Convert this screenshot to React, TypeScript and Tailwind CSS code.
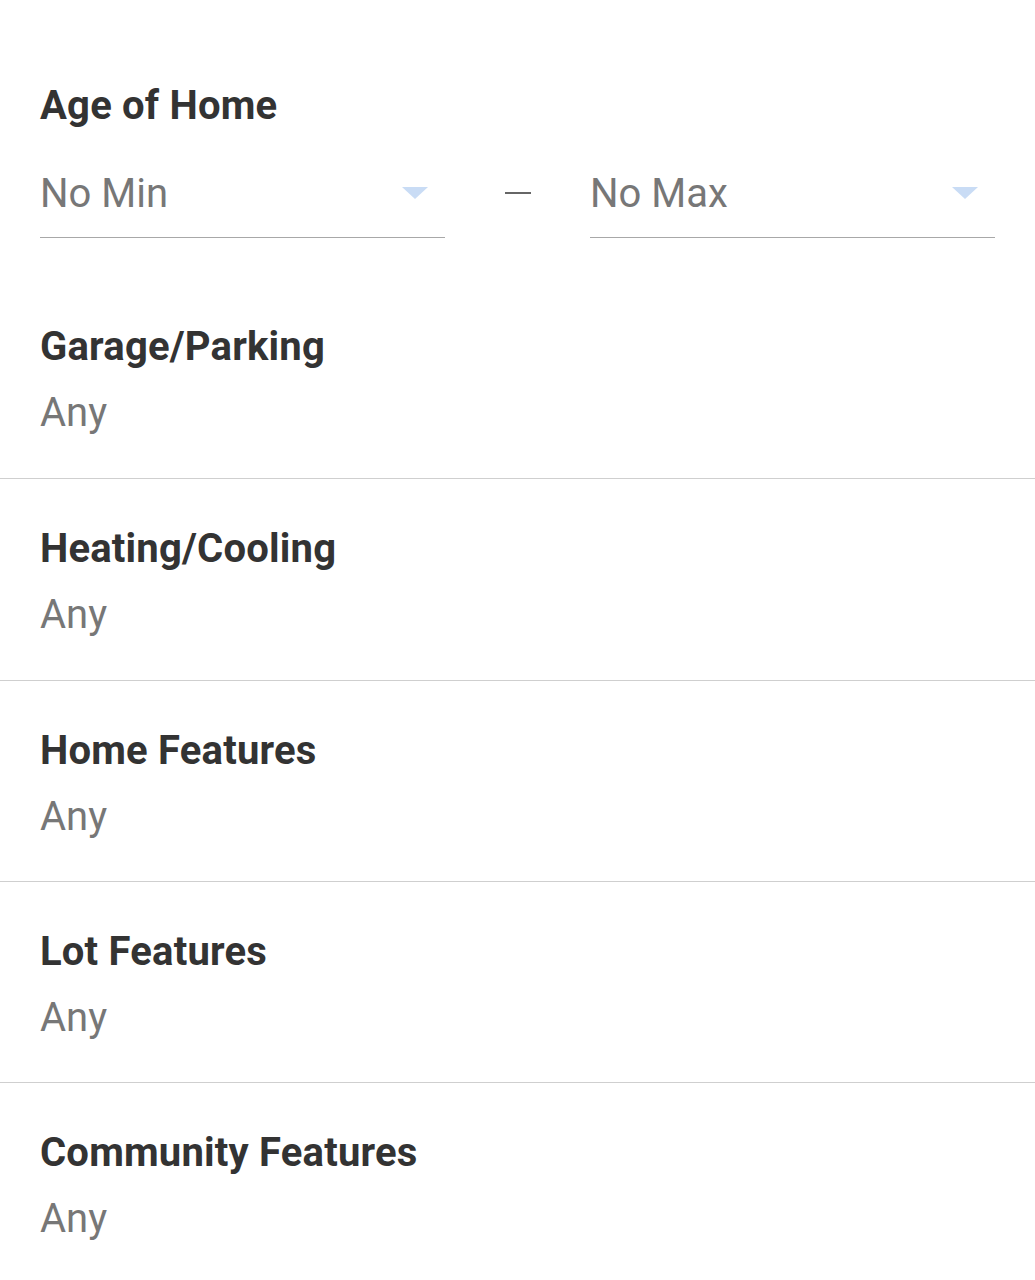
import React from "react";

const Arrow = () => (
  <svg width="26" height="12" viewBox="0 0 26 12" className="shrink-0 -mt-[3px]">
    <polygon points="0,0 26,0 13,12" fill="#c9dcf5" />
  </svg>
);

const Row = ({ title, first, extra }: { title: string; first?: boolean; extra?: boolean }) => (
  <div
    className={
      first
        ? "px-10 pt-[85px] pb-[41px]"
        : extra
        ? "border-t border-[#cfcfcf] px-10 pt-[46px] pb-[41px]"
        : "border-t border-[#cfcfcf] px-10 pt-[46px] pb-[40px]"
    }
  >
    <div className="text-[40px] leading-[48px] font-bold text-[#333333] tracking-[0.2px]">{title}</div>
    <div className="mt-[18px] text-[40px] leading-[48px] text-[#777777]">Any</div>
  </div>
);

export default function App() {
  return (
    <div className="w-[1035px] min-h-[1280px] bg-white" style={{ fontFamily: "Roboto, 'Liberation Sans', sans-serif" }}>
      <div className="px-10 pt-[82px]">
        <div className="text-[40px] leading-[48px] font-bold text-[#333333] tracking-[0.2px]">Age of Home</div>
        <div className="mt-[40px] flex items-start">
          <div className="w-[405px] border-b border-[#a8a8a8] pb-[19px] flex items-center justify-between pr-[17px]">
            <span className="text-[40px] leading-[48px] text-[#777777]">No Min</span>
            <Arrow />
          </div>
          <div className="w-[145px] flex justify-center pt-[22px]">
            <div className="w-[26px] h-[2px] bg-[#666666]" />
          </div>
          <div className="w-[405px] border-b border-[#a8a8a8] pb-[19px] flex items-center justify-between pr-[17px]">
            <span className="text-[40px] leading-[48px] text-[#777777]">No Max</span>
            <Arrow />
          </div>
        </div>
      </div>
      <Row title="Garage/Parking" first />
      <Row title="Heating/Cooling" extra />
      <Row title="Home Features" />
      <Row title="Lot Features" />
      <Row title="Community Features" />
    </div>
  );
}
